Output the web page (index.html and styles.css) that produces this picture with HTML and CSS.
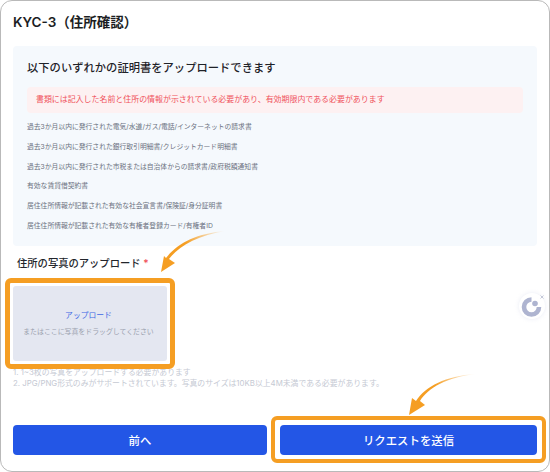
FILE: index.html
```html
<!DOCTYPE html>
<html lang="ja">
<head>
<meta charset="utf-8">
<title>KYC-3</title>
<link rel="stylesheet" href="styles.css">
</head>
<body>
<main class="card">
  <h1 class="title">KYC-3（住所確認）</h1>
  <section class="panel">
    <h2 class="panel-title">以下のいずれかの証明書をアップロードできます</h2>
    <p class="alert">書類には記入した名前と住所の情報が示されている必要があり、有効期限内である必要があります</p>
    <ul class="doc-list">
      <li>過去3か月以内に発行された電気/水道/ガス/電話/インターネットの請求書</li>
      <li>過去3か月以内に発行された銀行取引明細書/クレジットカード明細書</li>
      <li>過去3か月以内に発行された市税または自治体からの請求書/政府税額通知書</li>
      <li>有効な賃貸借契約書</li>
      <li>居住住所情報が記載された有効な社会宣言書/保険証/身分証明書</li>
      <li>居住住所情報が記載された有効な有権者登録カード/有権者ID</li>
    </ul>
  </section>
  <p class="field-label">住所の写真のアップロード <span class="req">*</span></p>
  <div class="upload-wrap">
    <div class="upload">
      <span class="upload-link">アップロード</span>
      <span class="upload-hint">またはここに写真をドラッグしてください</span>
    </div>
  </div>
  <ol class="notes">
    <li>1. 1~3枚の写真をアップロードする必要があります</li>
    <li>2. JPG/PNG形式のみがサポートされています。写真のサイズは10KB以上4M未満である必要があります。</li>
  </ol>
  <div class="actions">
    <button class="btn btn-back" type="button">前へ</button>
    <button class="btn btn-primary" type="button">リクエストを送信</button>
  </div>

  <svg class="arrows" viewBox="0 0 550 472" width="550" height="472" aria-hidden="true">
    <defs>
      <linearGradient id="fade1" gradientUnits="userSpaceOnUse" x1="225" y1="232" x2="165" y2="270">
        <stop offset="0" stop-color="#f59e23" stop-opacity="0"/>
        <stop offset="0.55" stop-color="#f59e23"/>
      </linearGradient>
      <linearGradient id="fade2" gradientUnits="userSpaceOnUse" x1="476" y1="374" x2="412" y2="412">
        <stop offset="0" stop-color="#f59e23" stop-opacity="0"/>
        <stop offset="0.55" stop-color="#f59e23"/>
      </linearGradient>
    </defs>
    <path d="M226 231C197 235 178 247 169 259L175 263L161 272L164 256L166 258C177 244 196 233 226 231Z" fill="url(#fade1)"/>
    <path d="M476 374C447 377 428 388 420 401L425 405L409 415L412 398L416 401C426 386 445 376 476 374Z" fill="url(#fade2)"/>
  </svg>

  <div class="widget" aria-hidden="true">
    <svg viewBox="0 0 26 26" width="26" height="26">
      <path d="M12.5 6.5A7.5 7.5 0 1 0 20 14" fill="none" stroke="#aeb4d0" stroke-width="4.6"/>
      <circle cx="16" cy="10.5" r="2.8" fill="#aeb4d0"/>
      <path d="M21.5 2.5l3 3m0-3l-3 3" stroke="#c4c8d8" stroke-width="1" fill="none"/>
    </svg>
  </div>
</main>
</body>
</html>
```

FILE: styles.css
```css
* { box-sizing: border-box; }

html, body {
  margin: 0;
  padding: 0;
  width: 550px;
  height: 472px;
  overflow: hidden;
  background: #fff;
}

body {
  font-family: Inter, "Noto Sans CJK JP", sans-serif;
}

.card {
  position: relative;
  width: 550px;
  height: 472px;
  padding: 12px 12px 0;
  border: 1px solid #b9b9b9;
  border-radius: 12px;
  background: #fff;
}

.title {
  margin: 0;
  height: 20px;
  font-size: 13.5px;
  line-height: 19px;
  font-weight: 600;
  color: #1b1d22;
}

.panel {
  width: 524px;
  height: 200px;
  margin-top: 13px;
  padding: 13px 14px 0;
  border-radius: 4px;
  background: #f5f9fd;
}

.panel-title {
  margin: 0;
  font-size: 11.3px;
  line-height: 18px;
  font-weight: 500;
  color: #1f2228;
}

.alert {
  height: 26px;
  margin: 10px 0 0;
  padding-left: 9px;
  border-radius: 4px;
  background: #fdf1f2;
  color: #f0525c;
  font-size: 7.95px;
  line-height: 25px;
}

.doc-list {
  display: flex;
  flex-direction: column;
  gap: 9.75px;
  margin: 9px 0 0;
  padding: 0;
  list-style: none;
  color: #6b7180;
  font-size: 6.8px;
  line-height: 10px;
}

.field-label {
  margin: 9px 0 0 4px;
  font-size: 10.3px;
  line-height: 16px;
  font-weight: 500;
  color: #22252b;
}

.req {
  color: #f0525c;
}

.upload-wrap {
  position: relative;
  width: 170px;
  height: 91px;
  margin: 7px 0 0 -8px;
  padding: 3px;
  border: 5px solid #f59e23;
  border-radius: 6px;
  background: #fff;
}

.upload {
  display: flex;
  flex-direction: column;
  align-items: center;
  justify-content: center;
  gap: 7px;
  height: 100%;
  padding: 0 3px 2px 0;
  border-radius: 3px;
  background: #e4e7f1;
}

.upload-link {
  color: #3f68e4;
  font-size: 7.8px;
  line-height: 10px;
}

.upload-hint {
  color: #9a9fae;
  font-size: 6.9px;
  line-height: 9px;
}

.notes {
  margin: -2px 0 0;
  padding: 0;
  list-style: none;
  color: #c5c9d3;
  font-size: 7.85px;
  line-height: 11px;
}

.actions {
  display: flex;
  gap: 13px;
  margin-top: 36px;
  width: 524px;
}

.btn {
  height: 30px;
  padding: 0;
  border: 0;
  border-radius: 4px;
  background: #2356e6;
  color: #fff;
  font-family: inherit;
  font-size: 11.4px;
  font-weight: 500;
}

.btn-back {
  width: 254px;
}

.btn-primary {
  position: relative;
  width: 257px;
}

.btn-primary::after {
  content: "";
  position: absolute;
  top: -9.5px;
  right: -8.5px;
  bottom: -8px;
  left: -9px;
  border: 4.5px solid #f59e23;
  border-radius: 6px;
}

.arrows {
  position: absolute;
  top: -1px;
  left: -1px;
  pointer-events: none;
}

.widget {
  position: absolute;
  top: 292px;
  left: 518px;
  display: flex;
  align-items: center;
  justify-content: center;
  width: 26px;
  height: 26px;
  border-radius: 50%;
  background: #fff;
  box-shadow: 0 0 4px rgba(170, 180, 215, 0.25);
}
```
